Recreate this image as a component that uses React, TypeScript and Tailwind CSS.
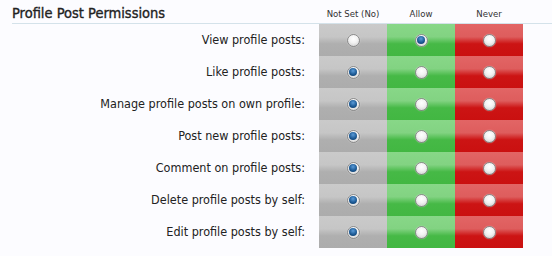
import React from "react";

const rows: { label: string; value: 0 | 1 | 2 }[] = [
  { label: "View profile posts:", value: 1 },
  { label: "Like profile posts:", value: 0 },
  { label: "Manage profile posts on own profile:", value: 0 },
  { label: "Post new profile posts:", value: 0 },
  { label: "Comment on profile posts:", value: 0 },
  { label: "Delete profile posts by self:", value: 0 },
  { label: "Edit profile posts by self:", value: 0 },
];

function Radio({ checked }: { checked: boolean }) {
  return (
    <div className="w-[13px] h-[13px] rounded-full border border-[#8a8a8a] bg-[radial-gradient(circle_at_50%_35%,#ffffff_0%,#f2f2f2_45%,#c8c8c8_100%)] flex items-center justify-center shadow-[0_0_1px_rgba(255,255,255,0.8)]">
      {checked && (
        <div className="w-[8px] h-[8px] rounded-full bg-[radial-gradient(circle_at_50%_35%,#5b9bd8_0%,#1d5b96_55%,#0d3560_100%)]" />
      )}
    </div>
  );
}

const cellBase = "w-[68px] h-[32px] flex items-center justify-center";
const gray = "bg-[linear-gradient(to_bottom,#cacaca_0%,#c6c6c6_40%,#afafaf_62%,#acacac_100%)]";
const green = "bg-[linear-gradient(to_bottom,#88d788_0%,#82d382_40%,#46b946_62%,#42b742_100%)]";
const red = "bg-[linear-gradient(to_bottom,#e26565_0%,#de5d5d_40%,#cc1414_62%,#ca1010_100%)]";

export default function App() {
  return (
    <div
      className="w-[552px] h-[256px] bg-[#fcfcff] text-[#222] overflow-hidden"
      style={{ fontFamily: "'DejaVu Sans Condensed', 'DejaVu Sans', sans-serif" }}
    >
      <div className="pl-[12px]">
        <div className="flex items-end h-[24px] border-b border-[#d4e2ea]">
          <div className="flex-1 text-[14.5px] leading-[20px] font-normal text-[#222] [-webkit-text-stroke:0.35px_#222]">
            Profile Post Permissions
          </div>
          <div className="flex pr-[29px] text-[9.5px] leading-[12px] text-[#333] pb-[3px]">
            <div className="w-[68px] text-center">Not Set (No)</div>
            <div className="w-[68px] text-center">Allow</div>
            <div className="w-[68px] text-center">Never</div>
          </div>
        </div>
        <div className="flex flex-col">
          {rows.map((r) => (
            <div key={r.label} className="flex items-center h-[32px]">
              <div className="flex-1 text-right pr-[14px] text-[12.5px] text-[#222]">
                {r.label}
              </div>
              <div className={`${cellBase} ${gray}`}>
                <Radio checked={r.value === 0} />
              </div>
              <div className={`${cellBase} ${green}`}>
                <Radio checked={r.value === 1} />
              </div>
              <div className={`${cellBase} ${red}`}>
                <Radio checked={r.value === 2} />
              </div>
              <div className="w-[29px]" />
            </div>
          ))}
        </div>
      </div>
    </div>
  );
}
